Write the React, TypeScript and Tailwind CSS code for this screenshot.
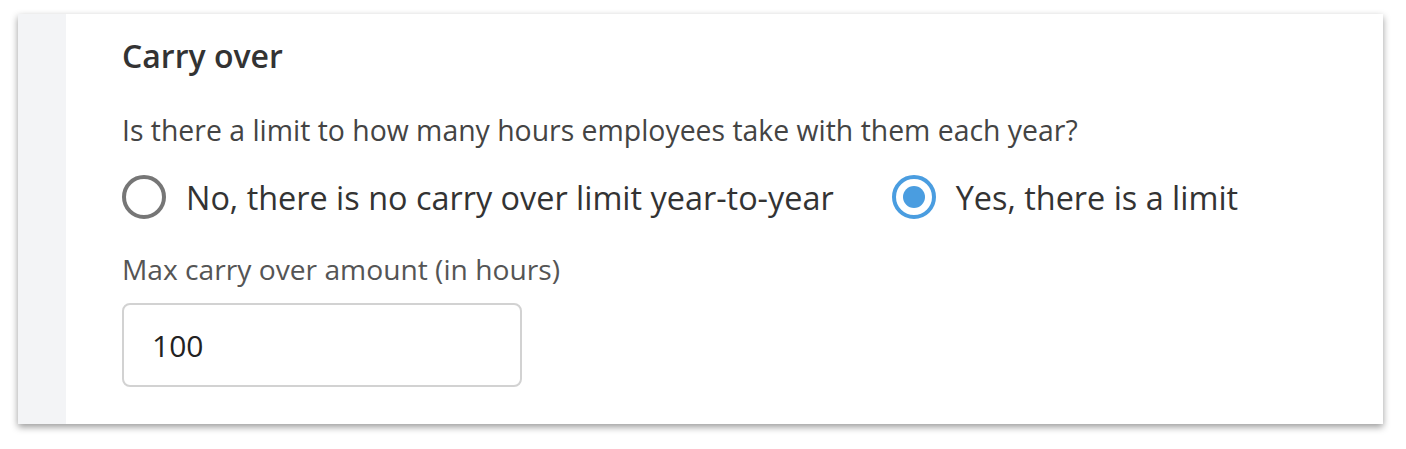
import React, { useState } from 'react';

const options = [
  { id: 'none', label: 'No, there is no carry over limit year-to-year' },
  { id: 'limit', label: 'Yes, there is a limit' },
];

const App: React.FC = () => {
  const [choice, setChoice] = useState('limit');
  const [hours, setHours] = useState('100');

  return (
    <div className="w-[1406px] h-[449px] bg-white pt-[14px] pl-[18px]" style={{ fontFamily: '"Open Sans", "Noto Sans", sans-serif' }}>
      <div className="w-[1365px] h-[410px] flex bg-white shadow-[0_3px_7px_rgba(0,0,0,0.4)]">
        {/* left rail */}
        <div className="w-12 bg-[#f3f4f6]" />

        <div className="flex-1 pl-[56px] pt-[22px] flex flex-col text-[#333]">
          <h2 className="text-[32px] leading-[40px] font-semibold text-[#333]">Carry over</h2>

          <p className="mt-[36px] text-[28.4px] leading-[36px] text-[#444]">
            Is there a limit to how many hours employees take with them each year?
          </p>

          {/* radios */}
          <div className="mt-[27px] flex items-center gap-[58px]">
            {options.map(o => {
              const on = choice === o.id;
              return (
                <label key={o.id} className="flex items-center gap-5 cursor-pointer" onClick={() => setChoice(o.id)}>
                  <span className={`w-11 h-11 rounded-full border-4 flex items-center justify-center ${on ? 'border-[#4a9de0]' : 'border-[#767676]'}`}>
                    {on && <span className="w-[22px] h-[22px] rounded-full bg-[#4a9de0]" />}
                  </span>
                  <span className="text-[32.4px] leading-[44px] text-[#333]">{o.label}</span>
                </label>
              );
            })}
          </div>

          <label className="mt-[34px] text-[28.2px] leading-[32px] text-[#555]">Max carry over amount (in hours)</label>
          <input
            className="mt-[18px] w-[400px] h-[84px] border-2 border-[#d2d2d2] rounded-lg pl-7 text-[30px] text-[#222] outline-none"
            value={hours}
            onChange={e => setHours(e.target.value)}
          />
        </div>
      </div>
    </div>
  );
};

export default App;
